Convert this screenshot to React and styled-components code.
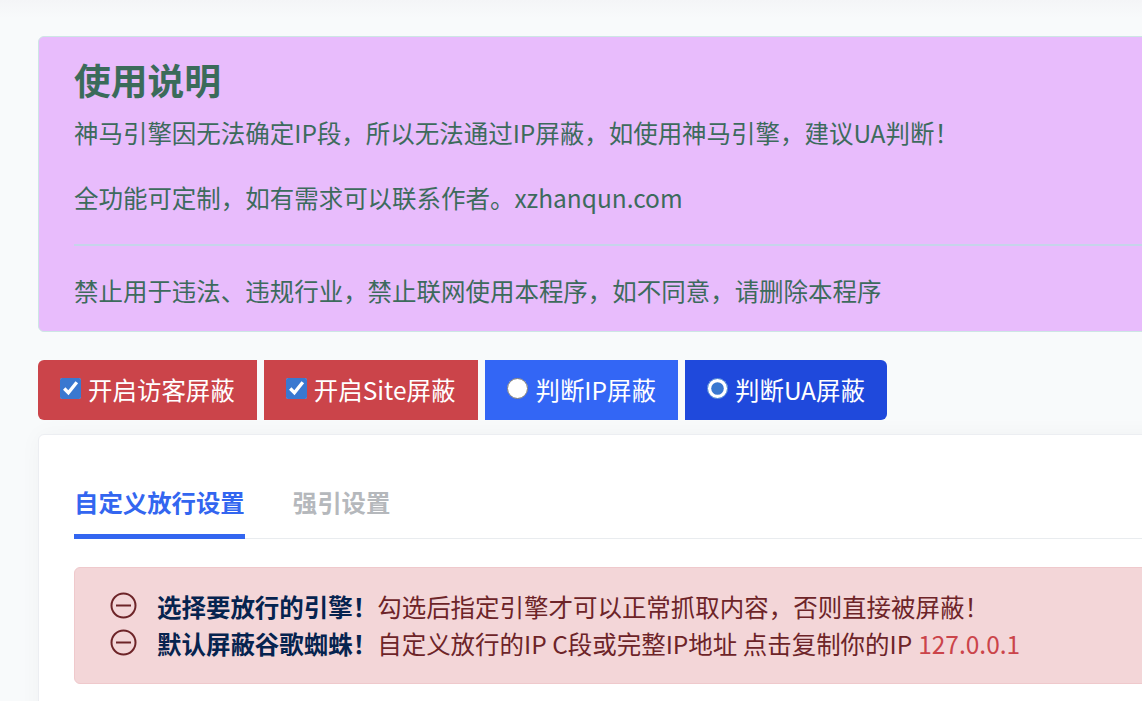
import React from 'react';
import styled, { createGlobalStyle } from 'styled-components';

const Global = createGlobalStyle`
  html, body { margin: 0; padding: 0; height: 100%; overflow: hidden; background: #f8fafb; }
  body { font-family: "Noto Sans CJK SC", "Noto Sans", sans-serif; font-size: 24.48px; line-height: 36.75px; color: #212529; }
`;
const Page = styled.div`
  width: 1500px; height: 701px; padding: 36px 0 0 38px; box-sizing: border-box; overflow: hidden;
  background: linear-gradient(#f4f5f7, #f8fafb 18px);
`;
const Notice = styled.section`
  box-sizing: border-box; height: 296px; padding: 20px 35px 0; background: #e8bcfc;
  border: 1px solid #cde6e4; border-radius: 6px; color: #3d6b5c;
`;
const NoticeTitle = styled.h4`
  margin: 0 0 14px; font-size: 36.75px; line-height: 44px; font-weight: 700; color: #3b6b5a;
`;
const NoticeText = styled.p`
  margin: 0 0 ${p => p.$gap || 0}px;
`;
const Rule = styled.hr`
  height: 2px; margin: 27px 0 27px; border: 0; background: #c6d4ea;
`;
const Bar = styled.div`
  display: flex; gap: 7px; margin-top: 28px;
`;
const Toggle = styled.label`
  display: flex; align-items: center; height: 60px; box-sizing: border-box; padding: 0 ${p => p.$pr || 22}px 0 22px;
  color: #fff; background: ${p => p.$bg};
  border-radius: ${p => p.$radius || '0'};
`;
const Check = styled.input`
  width: 21px; height: 21px; margin: 0 7px 4px 0; accent-color: #3a78d0;
`;
const Card = styled.section`
  margin-top: 14px; height: 400px; box-sizing: border-box; padding: 36px 35px 0;
  background: #fff; border: 1px solid #eceef2; border-radius: 6px;
  box-shadow: 0 0 22px rgba(30, 40, 60, .035);
`;
const Tabs = styled.div`
  display: flex; gap: 48px; height: 68px; box-sizing: border-box; border-bottom: 1px solid #e9ecef;
`;
const Tab = styled.div`
  height: 68px; box-sizing: border-box; padding: 13px 0 0 0; font-weight: 700; font-size: 24.4px;
  color: ${p => p.$active ? '#3366f0' : '#b5b8bc'};
  border-bottom: ${p => p.$active ? '5px solid #3366f0' : '0'};
`;
const Alert = styled.div`
  margin-top: 28px; height: 117px; box-sizing: border-box; padding: 21px 35px 0;
  background: #f3d6d8; border: 1px solid #efc9cc; border-radius: 6px; color: #6d2428;
`;
const Line = styled.div`
  display: flex; align-items: center; height: 37px; white-space: nowrap;
`;
const Glyph = styled.svg`
  width: 27px; height: 27px; flex: none; margin-right: 20px; margin-bottom: 4px; color: #6d2428;
`;
const Lead = styled.strong`
  font-weight: 700; color: #06234f;
`;
const Ip = styled.span`
  color: #cb444a; margin-left: 6px;
`;

const Minus = () => (
  <Glyph viewBox="0 0 27 27" fill="none" stroke="currentColor" strokeWidth="2">
    <circle cx="13.5" cy="13.5" r="12" />
    <path d="M6 13.5h15" />
  </Glyph>
);

export default function App() {
  return (
    <Page>
      <Global />
      <Notice>
        <NoticeTitle>使用说明</NoticeTitle>
        <NoticeText $gap={28}>神马引擎因无法确定IP段，所以无法通过IP屏蔽，如使用神马引擎，建议UA判断！</NoticeText>
        <NoticeText>全功能可定制，如有需求可以联系作者。xzhanqun.com</NoticeText>
        <Rule />
        <NoticeText>禁止用于违法、违规行业，禁止联网使用本程序，如不同意，请删除本程序</NoticeText>
      </Notice>
      <Bar>
        <Toggle $bg="#cb444a" $radius="6px 0 0 6px"><Check type="checkbox" defaultChecked />开启访客屏蔽</Toggle>
        <Toggle $bg="#cb444a" $pr={23}><Check type="checkbox" defaultChecked />开启Site屏蔽</Toggle>
        <Toggle $bg="#3366f5"><Check type="radio" name="mode" />判断IP屏蔽</Toggle>
        <Toggle $bg="#1f49dc" $radius="0 6px 6px 0"><Check type="radio" name="mode" defaultChecked />判断UA屏蔽</Toggle>
      </Bar>
      <Card>
        <Tabs>
          <Tab $active>自定义放行设置</Tab>
          <Tab>强引设置</Tab>
        </Tabs>
        <Alert>
          <Line><Minus /><Lead>选择要放行的引擎！</Lead>勾选后指定引擎才可以正常抓取内容，否则直接被屏蔽！</Line>
          <Line><Minus /><Lead>默认屏蔽谷歌蜘蛛！</Lead>自定义放行的IP C段或完整IP地址 点击复制你的IP<Ip>127.0.0.1</Ip></Line>
        </Alert>
      </Card>
    </Page>
  );
}
